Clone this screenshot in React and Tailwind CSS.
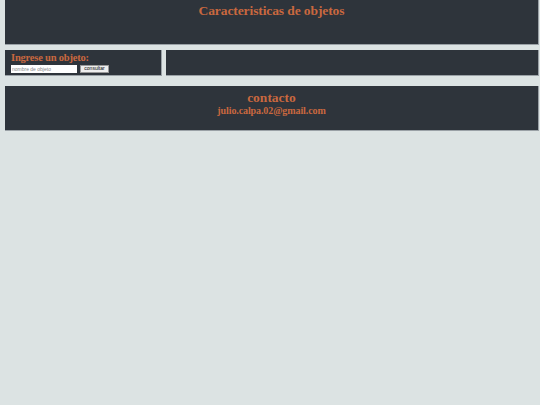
export default function App() {
  return (
    <div
      className="w-[540px] h-[405px] bg-[#dce3e3] overflow-hidden"
      style={{ fontFamily: '"Liberation Serif", serif' }}
    >
      <div className="ml-[5px] mr-[1px]">
        {/* header */}
        <header className="h-[45px] bg-[#2e343b] border-r border-b border-[#9aa1a6] flex justify-center">
          <h1 className="text-[13.5px] font-bold text-[#c9683f] leading-none mt-[4px] tracking-[-0.1px]">
            Caracteristicas de objetos
          </h1>
        </header>

        {/* search + result */}
        <div className="flex gap-[4px] mt-[5px]">
          <div className="w-[157px] h-[26px] bg-[#2e343b] border-r border-b border-[#9aa1a6] pl-[6px] pt-[3px]">
            <div className="text-[10.5px] font-bold text-[#c9683f] leading-none tracking-[-0.2px]">Ingrese un objeto:</div>
            <div className="flex gap-[3px] mt-[1px]">
              <input
                placeholder="nombre de objeto"
                className="w-[66px] h-[8px] bg-white text-[5px] px-[1px] placeholder:text-[#888] outline-none"
                style={{ fontFamily: '"Liberation Sans", sans-serif' }}
              />
              <button
                className="w-[29px] h-[8px] bg-[#eeeeee] border border-[#999] text-[5px] leading-none text-black flex items-center justify-center"
                style={{ fontFamily: '"Liberation Sans", sans-serif' }}
              >
                consultar
              </button>
            </div>
          </div>
          <div className="flex-1 h-[26px] bg-[#2e343b] border-r border-b border-[#9aa1a6]" />
        </div>

        {/* contact */}
        <footer className="mt-[10px] h-[45px] bg-[#2e343b] border-r border-b border-[#9aa1a6] flex flex-col items-center pt-[4px]">
          <div className="text-[13.5px] font-bold text-[#c9683f] leading-[15px]">contacto</div>
          <div className="text-[10px] font-bold text-[#c9683f] leading-[12px] tracking-[-0.1px]">julio.calpa.02@gmail.com</div>
        </footer>
      </div>
    </div>
  );
}
